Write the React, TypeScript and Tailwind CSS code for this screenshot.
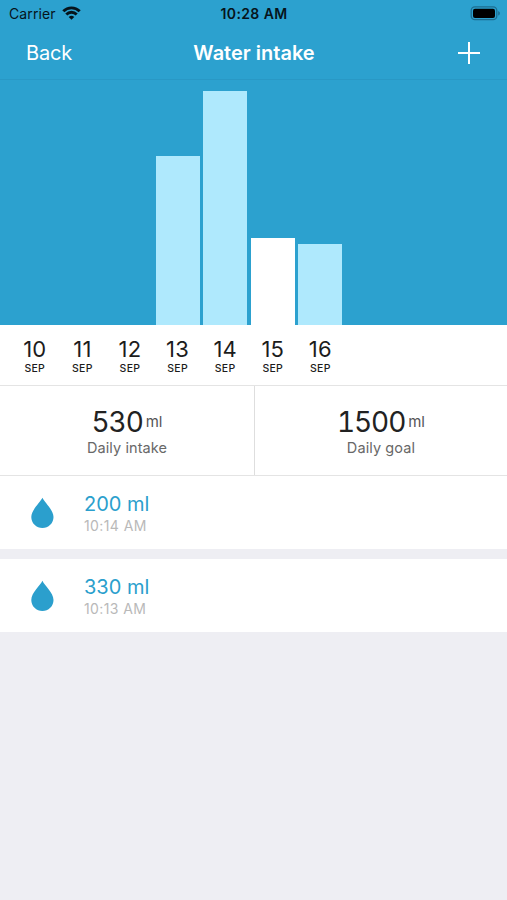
const days = [
  { day: "10", height: 0 },
  { day: "11", height: 0 },
  { day: "12", height: 0 },
  { day: "13", height: 169 },
  { day: "14", height: 234.5 },
  { day: "15", height: 87, selected: true },
  { day: "16", height: 81.5 },
];

const entries = [
  { amount: "200 ml", time: "10:14 AM" },
  { amount: "330 ml", time: "10:13 AM" },
];

function WifiIcon() {
  return (
    <svg width="19" height="14" viewBox="0 0 19 14" className="ml-[6px] -mt-[1px]">
      <g fill="none" stroke="#06141b" strokeWidth="2.9">
        <path d="M1.300 5.300a11.600 11.600 0 0 1 16.400 0" />
        <path d="M4.300 8.500a7.300 7.300 0 0 1 10.400 0" />
      </g>
      <path d="M9.500 13.800 6.700 11a4 4 0 0 1 5.600 0z" fill="#06141b" />
    </svg>
  );
}

function BatteryIcon() {
  return (
    <svg width="31" height="15" viewBox="0 0 31 15">
      <rect x="1.200" y="0.900" width="25.600" height="12.800" rx="3.600" fill="none" stroke="#1d6e91" strokeWidth="1.300" />
      <rect x="3" y="2.700" width="22" height="9.200" rx="2" fill="#000" />
      <path d="M28.200 5v4.600c1-.4 1.700-1.300 1.700-2.300s-.7-1.900-1.700-2.300z" fill="#1d6e91" />
    </svg>
  );
}

function Drop() {
  return (
    <svg width="24" height="32" viewBox="0 0 24 32">
      <path d="M12.400.8c2.200 4.800 11.100 12 11.100 19.200a11.100 11.100 0 0 1-22.200 0C1.300 12.800 10.200 5.600 12.400.8z" fill="#2b9fcd" />
    </svg>
  );
}

function Stat({ value, label }: { value: string; label: string }) {
  return (
    <div className="flex flex-col items-center pt-[19px]">
      <div className="flex whitespace-nowrap text-[#222]">
        <span className="text-[28px] leading-[34px] tabular-nums tracking-[-1.100px]">{value}</span>
        <span className="ml-[3px] text-[15px] leading-[34px] text-[#555]">ml</span>
      </div>
      <span className="text-[14.500px] leading-[18px] tracking-[0.1px] text-[#686868]">{label}</span>
    </div>
  );
}

export default function App() {
  return (
    <div className="flex h-[900px] w-[507px] flex-col overflow-hidden bg-[#eeeef3] font-['Inter','Liberation_Sans',sans-serif]">
      <header className="h-[79px] bg-[#2ca1cf]">
        <div className="grid h-[27px] grid-cols-[1fr_auto_1fr] items-center pl-[9px] pr-[6px] text-[#06141b]">
          <div className="flex items-center">
            <span className="text-[14px] tracking-[0.1px]">Carrier</span>
            <WifiIcon />
          </div>
          <span className="-ml-[2px] text-[14px] font-semibold tracking-[0.4px]">10:28 AM</span>
          <div className="flex justify-end">
            <BatteryIcon />
          </div>
        </div>
        <div className="grid h-[51px] grid-cols-[1fr_auto_1fr] items-center pl-[26px] pr-[27px] text-white">
          <span className="text-[20px] tracking-[-0.2px]">Back</span>
          <h1 className="pl-[2px] text-[20px] font-semibold">Water intake</h1>
          <svg width="22" height="22" viewBox="0 0 22 22" className="justify-self-end">
            <path d="M11 0v22M0 11h22" stroke="#fff" strokeWidth="2" />
          </svg>
        </div>
      </header>

      <section className="flex h-[246px] items-end gap-[3.500px] border-t border-[#2998c5] bg-[#2ca1cf] pl-[13px]">
        {days.map((d) => (
          <div
            key={d.day}
            className={`w-[44px] ${d.selected ? "bg-white" : "bg-[#afe9fd]"}`}
            style={{ height: d.height }}
          />
        ))}
      </section>

      <section className="flex h-[60px] bg-white pl-[11px] pt-[11px]">
        {days.map((d) => (
          <div key={d.day} className="flex w-[47.600px] flex-col items-center text-[#1c1c1c]">
            <span className="text-[22px] leading-[26px] tracking-[0.2px]">{d.day}</span>
            <span className="text-[10.500px] font-medium leading-[14px] tracking-[0.3px]">SEP</span>
          </div>
        ))}
      </section>

      <section className="grid h-[91px] grid-cols-[254px_1px_1fr] border-y border-[#e4e4e4] bg-white">
        <Stat value="530" label="Daily intake" />
        <div className="bg-[#dedede]" />
        <Stat value="1500" label="Daily goal" />
      </section>

      <ul className="flex flex-col gap-[10px]">
        {entries.map((e) => (
          <li key={e.time} className="flex h-[73px] items-center bg-white pl-[30px]">
            <Drop />
            <div className="ml-[30px] flex flex-col pt-[2px]">
              <span className="text-[20px] leading-[24px] text-[#2b9fcd]">{e.amount}</span>
              <span className="text-[14px] leading-[19px] tracking-[0.4px] text-[#b9b9b9]">{e.time}</span>
            </div>
          </li>
        ))}
      </ul>
    </div>
  );
}
